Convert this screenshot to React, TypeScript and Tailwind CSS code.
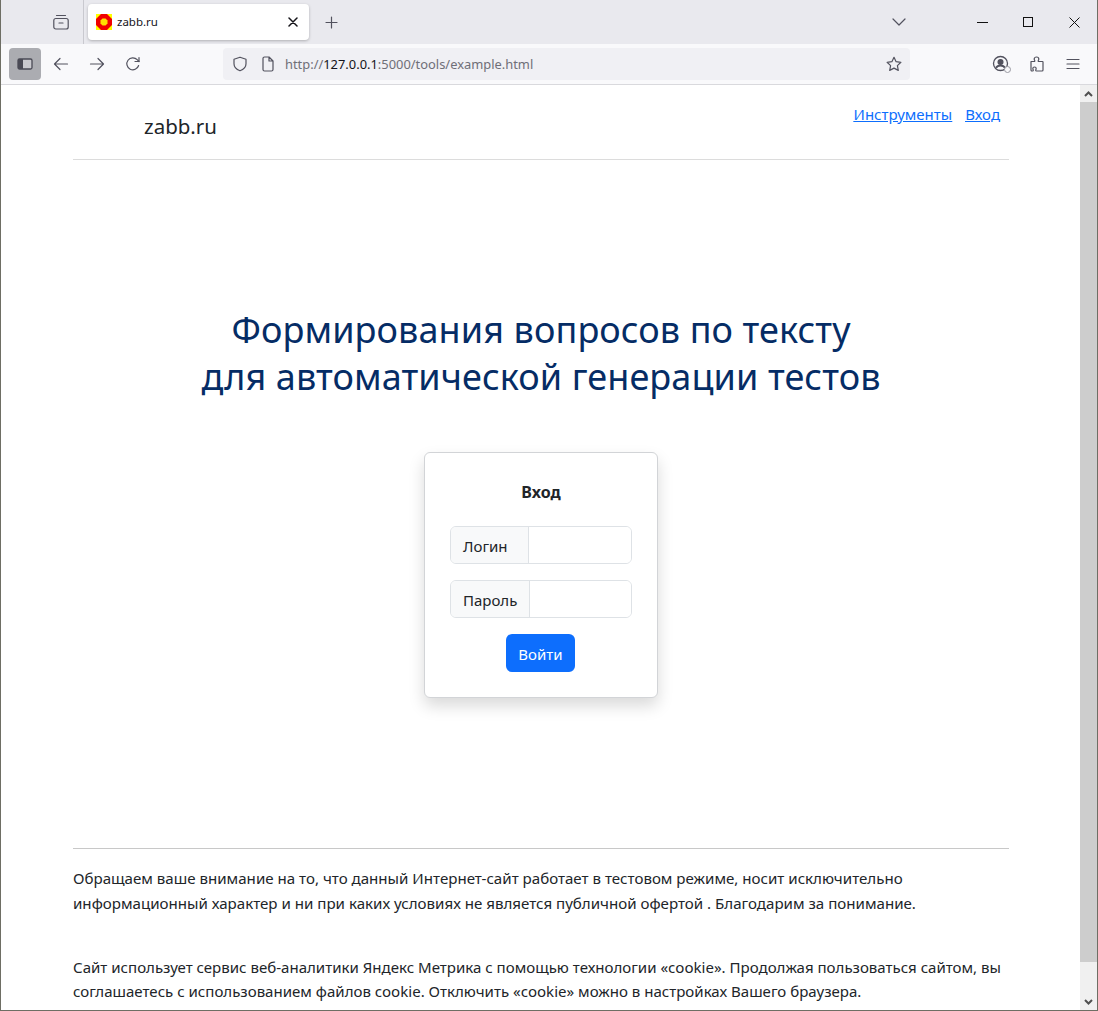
const ui = "font-['Noto_Sans','Open_Sans',sans-serif]";

const Stroke = ({ children, className = "" }: { children: React.ReactNode; className?: string }) => (
  <svg width="16" height="16" viewBox="0 0 16 16" fill="none" stroke="#52525e" strokeWidth="1.2" strokeLinecap="round" strokeLinejoin="round" className={className}>
    {children}
  </svg>
);

const Favicon = () => (
  <svg width="16" height="16" viewBox="0 0 16 16" className="shrink-0">
    <rect width="16" height="16" fill="#ffff00" />
    <polygon points="5,0 11,0 16,5 16,11 11,16 5,16 0,11 0,5" fill="#f00000" />
    <polygon points="6.500,4.500 9.500,4.500 11.500,6.500 11.500,9.500 9.500,11.500 6.500,11.500 4.500,9.500 4.500,6.500" fill="#ffe000" />
  </svg>
);

const TabBar = () => (
  <div className="h-[44px] flex bg-[#e9e9ee] shrink-0">
    <div className="w-[83px] border-r border-[#c9c9cf] h-[44px] flex items-center justify-center pl-[38px]">
      <Stroke>
        <rect x="0.800" y="4.500" width="14.400" height="10.500" rx="2" />
        <path d="M3.500 1.500h9M6 9h4" />
      </Stroke>
    </div>
    <div className="ml-[4px] mt-[4px] w-[221px] h-[36px] bg-white rounded-[4px] shadow-[0_1px_3px_rgba(0,0,0,0.25)] flex items-center pl-[8px] pr-[11px]">
      <Favicon />
      <span className={`${ui} ml-[5px] text-[11.500px] text-[#15141a] flex-1`}>zabb.ru</span>
      <svg width="10" height="10" viewBox="0 0 10 10" fill="none" stroke="#15141a" strokeWidth="1.500" strokeLinecap="round">
        <path d="M1 1l8 8M9 1l-8 8" />
      </svg>
    </div>
    <div className="ml-[16px] h-[44px] flex items-center">
      <svg width="13" height="13" viewBox="0 0 13 13" fill="none" stroke="#52525e" strokeWidth="1.200" strokeLinecap="round">
        <path d="M6.500 1v11M1 6.500h11" />
      </svg>
    </div>
    <div className="flex-1" />
    <div className="w-[40px] h-[44px] flex items-center justify-center mr-[41px]">
      <svg width="14" height="8" viewBox="0 0 14 8" fill="none" stroke="#52525e" strokeWidth="1.200" strokeLinecap="round" strokeLinejoin="round">
        <path d="M1 1l6 6 6-6" />
      </svg>
    </div>
    <div className="w-[45px] h-[44px] flex items-center justify-center">
      <div className="w-[11px] h-[1px] bg-[#111]" />
    </div>
    <div className="w-[46px] h-[44px] flex items-center justify-center">
      <div className="w-[10px] h-[10px] border border-[#111]" />
    </div>
    <div className="w-[46px] h-[44px] flex items-center justify-center">
      <svg width="11" height="11" viewBox="0 0 11 11" fill="none" stroke="#111" strokeWidth="1">
        <path d="M.5.5l10 10M10.500.5l-10 10" />
      </svg>
    </div>
  </div>
);

const Toolbar = () => (
  <div className="h-[41px] flex items-center bg-[#f9f9fb] border-b border-[#d9d9dd] shrink-0 pb-[1px]">
    <div className="ml-[8px] w-[32px] h-[32px] rounded-[4px] bg-[#abacb1] flex items-center justify-center">
      <svg width="16" height="14" viewBox="0 0 16 14">
        <rect x="1" y="2" width="14" height="10" rx="1.500" fill="#c9c9ce" stroke="#4a4a55" strokeWidth="1.300" />
        <rect x="1" y="2" width="5" height="10" fill="#4a4a55" />
      </svg>
    </div>
    <div className="w-[16px] ml-[12px] flex">
      <Stroke>
        <path d="M14.500 8h-13M7 2.500L1.500 8 7 13.500" />
      </Stroke>
    </div>
    <div className="w-[16px] ml-[20px] flex">
      <Stroke>
        <path d="M1.500 8h13M9 2.500L14.500 8 9 13.500" />
      </Stroke>
    </div>
    <div className="w-[16px] ml-[20px] flex">
      <Stroke>
        <path d="M13.600 9.500A6 6 0 1 1 12.200 3.700L14 5.500" />
        <path d="M14 1.500v4h-4" />
      </Stroke>
    </div>
    <div className="ml-[82px] w-[687px] h-[32px] rounded-[4px] bg-[#f0f0f4] flex items-center pl-[9px] pr-[8px]">
      <Stroke>
        <path d="M8 1.200l6 2v4.600c0 3.200-2.600 5.800-6 7-3.400-1.200-6-3.800-6-7V3.200z" />
      </Stroke>
      <Stroke className="ml-[12px]">
        <path d="M3 2.500A1.500 1.500 0 0 1 4.500 1H9l4 4v8.500a1.500 1.500 0 0 1-1.500 1.500h-7A1.500 1.500 0 0 1 3 13.500zM9 1v4h4" />
      </Stroke>
      <span className={`${ui} ml-[9px] pt-[3px] text-[12.900px] text-[#6f6f78] flex-1`}>
        http://<span className="text-[#15141a]">127.0.0.1</span>:5000/tools/example.html
      </span>
      <Stroke>
        <path d="M8 1.300l2.100 4.400 4.800.6-3.500 3.300.9 4.800L8 12.100l-4.300 2.300.9-4.800L1.100 6.300l4.800-.6z" />
      </Stroke>
    </div>
    <div className="flex-1" />
    <div className="relative flex mr-[19px]">
      <svg width="18" height="18" viewBox="0 0 18 18" fill="none" stroke="#52525e" strokeWidth="1.300">
        <circle cx="8.500" cy="8.500" r="7" />
        <circle cx="8.500" cy="7" r="2.400" fill="#52525e" />
        <path d="M4 12.800c1-1.800 2.600-2.400 4.500-2.400s3.500.6 4.500 2.400" strokeWidth="2" />
      </svg>
      <span className="absolute left-[12px] top-[11px] w-[7px] h-[7px] rounded-full bg-[#f9f9fb] border border-[#9a9aa2]" />
    </div>
    <div className="flex mr-[20px]">
      <Stroke>
        <path d="M2 5.500h3.200c.6 0 .8-.5.5-1C5.300 3.900 5.200 3.400 5.200 3a2.300 2 0 0 1 4.600 0c0 .4-.1.9-.5 1.500-.3.5-.1 1 .5 1H13.500a.5.5 0 0 1 .5.500v8a1 1 0 0 1-1 1H7.500c-.5 0-.8-.4-.8-.8 0-.5.5-.8.5-1.500a1.700 1.700 0 0 0-3.400 0c0 .7.500 1 .500 1.500 0 .4-.3.800-.8.800H3a1 1 0 0 1-1-1z" />
      </Stroke>
    </div>
    <div className="flex mr-[16px]">
      <Stroke>
        <path d="M2 3.500h12M2 8h12M2 12.500h12" />
      </Stroke>
    </div>
  </div>
);

const Scrollbar = () => (
  <div className="w-[17px] flex flex-col bg-[#f0f0f0] shrink-0">
    <div className="h-[17px] flex items-center justify-center">
      <svg width="9" height="6" viewBox="0 0 9 6" fill="none" stroke="#505050" strokeWidth="2">
        <path d="M1 5l3.500-3.500L8 5" />
      </svg>
    </div>
    <div className="h-[860px] bg-[#cdcdcd]" />
    <div className="flex-1" />
    <div className="h-[17px] flex items-center justify-center">
      <svg width="9" height="6" viewBox="0 0 9 6" fill="none" stroke="#505050" strokeWidth="2">
        <path d="M1 1l3.500 3.500L8 1" />
      </svg>
    </div>
  </div>
);

const InputGroup = ({ label, labelWidth }: { label: string; labelWidth: string }) => (
  <div className="flex h-[38px] border border-[#dee2e6] rounded-[6px] overflow-hidden">
    <div className={`${labelWidth} bg-[#f8f9fa] border-r border-[#dee2e6] pl-[12px] pt-[3px] flex items-center text-[15px] text-[#212529]`}>
      {label}
    </div>
    <div className="flex-1 bg-white" />
  </div>
);

const LoginCard = () => (
  <div className="w-[234px] h-[246px] mx-auto bg-white border border-[#d2d4d7] rounded-[6px] shadow-[0_8px_16px_rgba(0,0,0,0.15)] px-[25px] pt-[27px]">
    <div className="text-center font-bold text-[16px] leading-[24px] text-[#212529]">Вход</div>
    <div className="mt-[22px] flex flex-col gap-[16px]">
      <InputGroup label="Логин" labelWidth="w-[78px]" />
      <InputGroup label="Пароль" labelWidth="w-[79px]" />
    </div>
    <div className="mt-[16px] flex justify-center">
      <div className="w-[69px] h-[38px] mr-[1px] pt-[2px] rounded-[6px] bg-[#0d6efd] text-white text-[15px] flex items-center justify-center">Войти</div>
    </div>
  </div>
);

export default function App() {
  return (
    <div className="w-[1098px] h-[1011px] overflow-hidden flex flex-col border-l border-r border-b border-[#6e6e64] bg-white">
      <TabBar />
      <Toolbar />
      <div className="flex-1 flex min-h-0">
        <div className={`${ui} flex-1 overflow-hidden pl-[72px] pr-[71px] text-[#212529]`}>
          <header className="h-[75px] border-b border-[#dcdcdc] flex justify-between">
            <span className="ml-[71px] mt-[26px] text-[20.500px] leading-[30px]">zabb.ru</span>
            <nav className="flex gap-[13px] mr-[9px] mt-[17px] text-[15px] leading-[24px] text-[#0d6efd] underline">
              <a href="#">Инструменты</a>
              <a href="#">Вход</a>
            </nav>
          </header>
          <h1 className="mt-[146px] text-center text-[36px] tracking-[0.1px] leading-[47px] text-[#052c65]">
            Формирования вопросов по тексту
            <br />
            для автоматической генерации тестов
          </h1>
          <div className="mt-[52px]">
            <LoginCard />
          </div>
          <div className="mt-[150px] border-t border-[#c8c8c8] pt-[17px]">
            <p className="text-[15.100px] leading-[25px]">
              Обращаем ваше внимание на то, что данный Интернет-сайт работает в тестовом режиме, носит исключительно информационный характер и ни при каких условиях не является публичной офертой . Благодарим за понимание.
            </p>
            <p className="mt-[39px] text-[15.050px] leading-[24px]">
              Сайт использует сервис веб-аналитики Яндекс Метрика с помощью технологии «cookie». Продолжая пользоваться сайтом, вы соглашаетесь с использованием файлов cookie. Отключить «cookie» можно в настройках Вашего браузера.
            </p>
          </div>
        </div>
        <Scrollbar />
      </div>
    </div>
  );
}
